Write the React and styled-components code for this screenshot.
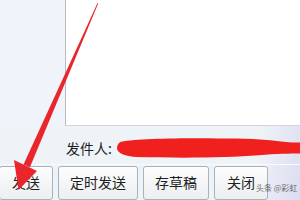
import styled, { createGlobalStyle } from 'styled-components';

const GlobalStyle = createGlobalStyle`
    html, body {
        margin: 0;
        padding: 0;
        background: #eef3f7;
    }
    body {
        font-family: "Noto Sans CJK SC", "Liberation Sans", sans-serif;
    }
`;

const Window = styled.div`
    position: relative;
    width: 300px;
    height: 200px;
    overflow: hidden;
    display: flex;
    flex-direction: column;
    background: linear-gradient(100deg, #eef3f7 0%, #eef3f7 85%, #dcdcf2 100%);
`;

const Top = styled.div`
    display: flex;
    height: 131px;
`;

const SidePanel = styled.div`
    width: 65px;
    background: #eef4f9;
`;

const Editor = styled.div`
    flex: 1;
    background: #ffffff;
    border-left: 1px solid #b7bcc1;
    border-bottom: 1px solid #d2d6da;
`;

const SenderRow = styled.div`
    display: flex;
    align-items: center;
    height: 39px;
    box-sizing: border-box;
    padding: 5px 0 0 66px;
    gap: 5px;
`;

const Label = styled.span`
    font-size: 14px;
    color: #1e1e1e;
    white-space: nowrap;
`;

const Scribble = styled.svg`
    flex: 1;
    height: 20px;
    margin-right: -4px;
`;

const ButtonBar = styled.div`
    display: flex;
    gap: 5px;
    padding-top: 1px;
    border-top: 1px solid #f8fafc;
`;

const Button = styled.div`
    width: ${(p) => p.$w}px;
    height: 34px;
    box-sizing: border-box;
    border: 1px solid #a9b1b9;
    border-radius: 3px;
    background: linear-gradient(#fdfdfd, #eceef0);
    font-size: 14px;
    color: #1e1e1e;
    display: flex;
    justify-content: center;
    padding-top: 5px;
    margin-left: ${(p) => p.$ml || 0}px;
`;

const Watermark = styled.span`
    position: absolute;
    left: 256px;
    top: 182px;
    font-size: 8px;
    color: #555;
    opacity: 0.85;
    white-space: nowrap;
`;

const ArrowLayer = styled.svg`
    position: absolute;
    left: 0;
    top: 0;
    pointer-events: none;
`;

const App = () => (
    <>
        <GlobalStyle />
        <Window>
            <Top>
                <SidePanel />
                <Editor />
            </Top>
            <SenderRow>
                <Label>发件人:</Label>
                <Scribble viewBox='0 0 185 22' preserveAspectRatio='none'>
                    <path
                        d='M4 4 C20 1 60 0 100 0.5 C130 0 150 2 165 4 C175 5 182 5 185 5 L185 17 C175 17 160 17 140 19 C110 22 60 22 20 21 C8 20 0 17 0 11 C0 7 2 5 4 4 Z'
                        fill='#f0201e'
                    />
                </Scribble>
            </SenderRow>
            <ButtonBar>
                <Button $w={54} $ml={-1}>发送</Button>
                <Button $w={80}>定时发送</Button>
                <Button $w={66}>存草稿</Button>
                <Button $w={54}>关闭</Button>
            </ButtonBar>
            <Watermark>头条 @彩虹</Watermark>
            <ArrowLayer width='300' height='200' viewBox='0 0 300 200'>
                <path d='M97.5 3 L98.2 3.6 L30 167 L23.5 164.5 Z' fill='#e8262c' />
                <path d='M37 171 L18.5 190 L14 160 Z' fill='#e8262c' />
            </ArrowLayer>
        </Window>
    </>
);

export default App;
